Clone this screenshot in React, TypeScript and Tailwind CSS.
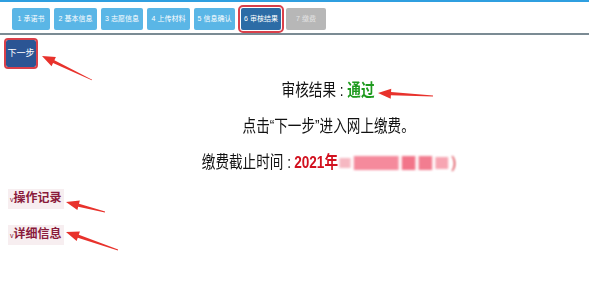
import React from "react";

const tabs = [
  { label: "1 承诺书", w: "w-[38px]" },
  { label: "2 基本信息", w: "w-[43px]" },
  { label: "3 志愿信息", w: "w-[42px]" },
  { label: "4 上传材料", w: "w-[43px]" },
  { label: "5 信息确认", w: "w-[41px]" },
];

function Arrow({ tip, tail }: { tip: [number, number]; tail: [number, number] }) {
  const [x1, y1] = tip;
  const [x2, y2] = tail;
  const dx = x2 - x1;
  const dy = y2 - y1;
  const len = Math.hypot(dx, dy);
  const ux = dx / len;
  const uy = dy / len;
  const px = -uy;
  const py = ux;
  const hl = 13;
  const hw = 5;
  const bx = x1 + ux * hl;
  const by = y1 + uy * hl;
  const pts = [
    [x1, y1],
    [bx + px * hw, by + py * hw],
    [bx + px * 1.6, by + py * 1.6],
    [x2 + px * 0.4, y2 + py * 0.4],
    [x2 - px * 0.4, y2 - py * 0.4],
    [bx - px * 1.6, by - py * 1.6],
    [bx - px * hw, by - py * hw],
  ]
    .map((p) => p.join(","))
    .join(" ");
  return <polygon points={pts} fill="#e8322c" />;
}

export default function App() {
  return (
    <div className="relative w-[589px] h-[281px] overflow-hidden bg-white font-['Liberation_Sans','Noto_Sans_CJK_SC',sans-serif]">
      <div className="h-[2px] bg-[#2f9fe0]" />
      <div className="flex items-end gap-[4px] pl-[12px] pt-[6px] pb-[3px]">
        {tabs.map((t) => (
          <div key={t.label} className={`${t.w} h-[22px] flex items-center justify-center rounded-[2px] bg-[#5ab6e6] text-white text-[7px]`}>
            {t.label}
          </div>
        ))}
        <div className="ml-[2px] w-[40px] h-[22px] flex items-center justify-center rounded-[2px] bg-[#2c6ca6] text-white text-[7px] outline-2 outline-offset-1 outline-[#d9404a]">
          6 审核结果
        </div>
        <div className="ml-[1px] w-[40px] h-[22px] flex items-center justify-center rounded-[2px] bg-[#b7b7b7] text-[#e4e4e4] text-[7px]">
          7 缴费
        </div>
      </div>
      <div className="h-[2px] bg-[#7b8b94]" />

      <div className="pt-[5px] pl-[6px]">
        <button className="w-[30px] h-[27px] flex items-center justify-center rounded-[2px] bg-[#2b5594] text-white text-[9px] outline-2 outline-[#d9404a]">
          下一步
        </button>
      </div>

      <div className="mt-[6px] pl-[68px] flex flex-col items-center text-[17px] leading-[36px] text-[#111]">
        <p className="scale-x-[0.8]">
          审核结果 : <span className="font-bold text-[#1e9a1e]">通过</span>
        </p>
        <p className="scale-x-[0.8]">点击“下一步”进入网上缴费。</p>
        <p className="scale-x-[0.8] flex items-center">
          缴费截止时间 : <span className="ml-[4px] font-bold text-[#d2111f]">2021年</span>
          <span className="ml-[2px] flex items-center gap-[4px] blur-[1px]">
            <span className="w-[14px] h-[10px] bg-[#f6b8c2]" />
            <span className="w-[56px] h-[14px] bg-[#f58a9c]" />
            <span className="w-[17px] h-[14px] bg-[#f27589]" />
            <span className="w-[17px] h-[14px] bg-[#f27d90]" />
            <span className="w-[16px] h-[12px] bg-[#f7a5b2]" />
            <span className="text-[#d2111f]">)</span>
          </span>
        </p>
      </div>

      <div className="mt-[8px] pl-[8px] flex flex-col gap-[16px] items-start text-[12px] leading-[18px] font-bold text-[#8a1b3b]">
        <div className="px-[2px] bg-[#f7eef0]">
          <span className="text-[7px] font-normal">v</span>操作记录
        </div>
        <div className="px-[2px] bg-[#f7eef0]">
          <span className="text-[7px] font-normal">v</span>详细信息
        </div>
      </div>

      <svg className="absolute inset-0 pointer-events-none" width="589" height="281">
        <Arrow tip={[42, 56]} tail={[92, 80]} />
        <Arrow tip={[378, 93]} tail={[433, 96]} />
        <Arrow tip={[66, 202]} tail={[105, 212]} />
        <Arrow tip={[66, 232]} tail={[118, 250]} />
      </svg>
    </div>
  );
}
